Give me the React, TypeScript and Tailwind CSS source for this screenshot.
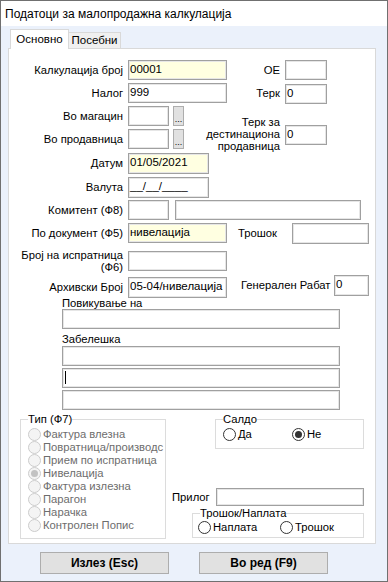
import React from "react"

type BoxProps = { w: string; h?: string; value?: string; yellow?: boolean; caret?: boolean; className?: string }

function Box({ w, h = "h-[20px]", value, yellow, caret, className = "" }: BoxProps) {
  return (
    <div
      className={`${w} ${h} ${className} shrink-0 border border-[#a0a0a0] shadow-[inset_0_0_0_1px_#e6e6e6] ${
        yellow ? "bg-[#ffffe1]" : "bg-white"
      } pl-[1px] leading-[16px] text-[11.5px] text-black overflow-hidden whitespace-nowrap`}
    >
      {caret ? <span className="block w-px h-[13px] bg-black mt-[2px] ml-[1px]" /> : value}
    </div>
  )
}

function Dots() {
  return (
    <div className="w-[11px] h-[20px] ml-[4px] shrink-0 border border-[#adadad] bg-[#e1e1e1] flex items-end justify-center text-[9px] leading-[12px] text-black">
      ...
    </div>
  )
}

function Radio({ label, checked, disabled }: { label: string; checked?: boolean; disabled?: boolean }) {
  return (
    <div className="flex items-center h-[13px] whitespace-nowrap">
      <span
        className={`w-[13px] h-[13px] shrink-0 rounded-full border flex items-center justify-center ${
          disabled ? "border-[#cccccc] bg-[#f4f4f4]" : "border-[#333333] bg-white"
        }`}
      >
        {checked && <span className={`w-[7px] h-[7px] rounded-full ${disabled ? "bg-[#c2c2c2]" : "bg-[#333333]"}`} />}
      </span>
      <span className={`ml-[2px] ${disabled ? "text-[#6d6d6d]" : "text-black"}`}>{label}</span>
    </div>
  )
}

const Label = ({ children }: { children: React.ReactNode }) => (
  <div className="w-[114px] shrink-0 text-right whitespace-nowrap">{children}</div>
)

const TIP = [
  "Фактура влезна",
  "Повратница/производс",
  "Прием по испратница",
  "Нивелација",
  "Фактура излезна",
  "Парагон",
  "Нарачка",
  "Контролен Попис",
]

export default function App() {
  return (
    <div className="w-[388px] h-[582px] border border-[#707070] bg-[#ebf1fb] font-['Liberation_Sans',Arial,sans-serif] text-[11.25px] text-black flex flex-col overflow-hidden">
      {/* Title */}
      <div className="h-[25px] bg-white pl-[4px] flex items-center shrink-0 text-[12px]">Податоци за малопродажна калкулација</div>

      {/* Tabs */}
      <div className="flex items-end pt-[3px] pl-[9px] h-[22px] shrink-0 text-[11.5px]">
        <div className="relative z-10 h-[20px] w-[59px] bg-white border border-b-0 border-[#d9d9d9] flex items-center justify-center -mb-px">
          Основно
        </div>
        <div className="h-[16px] w-[52px] bg-[#f0f0f0] border border-l-0 border-b-0 border-[#d9d9d9] flex items-center justify-center">
          Посебни
        </div>
      </div>

      {/* Panel */}
      <div className="ml-[7px] w-[368px] h-[496px] shrink-0 bg-white border border-[#d9d9d9] pt-[11px] flex flex-col">
        {/* Калкулација број / ОЕ */}
        <div className="flex items-center h-[20px]">
          <Label>Калкулација број</Label>
          <Box w="w-[99px]" className="ml-[5px]" yellow value="00001" />
          <div className="w-[53px] text-right">ОЕ</div>
          <Box w="w-[42px]" className="ml-[5px]" />
        </div>

        {/* Налог / Терк */}
        <div className="flex items-center h-[20px] mt-[3px]">
          <Label>Налог</Label>
          <Box w="w-[99px]" className="ml-[5px]" value="999" />
          <div className="w-[53px] text-right">Терк</div>
          <Box w="w-[42px]" className="ml-[5px] mt-[2px]" value="0" />
        </div>

        {/* Во магацин / Во продавница / Терк за дестинациона продавница */}
        <div className="flex h-[43px] mt-[3px]">
          <div className="flex flex-col gap-[3px]">
            <div className="flex items-center h-[20px]">
              <Label>Во магацин</Label>
              <Box w="w-[41px]" className="ml-[5px]" />
              <Dots />
            </div>
            <div className="flex items-center h-[20px]">
              <Label>Во продавница</Label>
              <Box w="w-[41px]" className="ml-[5px]" />
              <Dots />
            </div>
          </div>
          <div className="w-[96px] text-right leading-[12px] mt-[10px]">
            Терк за
            <br />
            дестинациона
            <br />
            продавница
          </div>
          <Box w="w-[42px]" className="ml-[5px] mt-[19px]" value="0" />
        </div>

        {/* Датум */}
        <div className="flex items-center h-[21px] mt-[4px]">
          <Label>Датум</Label>
          <Box w="w-[81px]" h="h-[21px]" className="ml-[5px]" yellow value="01/05/2021" />
        </div>

        {/* Валута */}
        <div className="flex items-center h-[21px] mt-[3px]">
          <Label>Валута</Label>
          <Box w="w-[81px]" h="h-[21px]" className="ml-[5px]" value="__/__/____" />
        </div>

        {/* Комитент */}
        <div className="flex items-center h-[20px] mt-[2px]">
          <Label>Комитент (Ф8)</Label>
          <Box w="w-[41px]" className="ml-[5px]" />
          <Box w="w-[186px]" className="ml-[6px]" />
        </div>

        {/* По документ / Трошок */}
        <div className="flex items-center h-[21px] mt-[3px]">
          <Label>По документ (Ф5)</Label>
          <Box w="w-[99px]" className="ml-[5px] self-start" yellow value="нивелација" />
          <div className="ml-[11px] w-[54px]">Трошок</div>
          <Box w="w-[77px]" h="h-[21px]" />
        </div>

        {/* Број на испратница */}
        <div className="flex items-end h-[21px] mt-[6px]">
          <div className="w-[114px] text-right leading-[12px] self-center">
            Број на испратница
            <br />
            (Ф6)
          </div>
          <Box w="w-[99px]" className="ml-[5px]" />
        </div>

        {/* Архивски Број / Генерален Рабат */}
        <div className="flex items-center h-[21px] mt-[6px]">
          <Label>Архивски Број</Label>
          <Box w="w-[99px]" h="h-[21px]" className="ml-[5px]" value="05-04/нивелација" />
          <div className="flex items-center h-[21px] -mt-[5px]">
            <div className="ml-[14px] w-[93px] whitespace-nowrap">Генерален Рабат</div>
            <Box w="w-[35px]" h="h-[21px]" value="0" />
          </div>
        </div>

        {/* Повикување на */}
        <div className="ml-[53px] leading-[11px] h-[11px]">Повикување на</div>
        <Box w="w-[278px]" className="ml-[53px]" />

        {/* Забелешка */}
        <div className="ml-[53px] leading-[12px] h-[12px] mt-[4px]">Забелешка</div>
        <Box w="w-[278px]" className="ml-[53px] mt-[1px]" />
        <Box w="w-[278px]" className="ml-[53px] mt-[2px]" caret />
        <Box w="w-[278px]" className="ml-[53px] mt-[2px]" />

        {/* Bottom groups */}
        <div className="flex mt-[3px] ml-[11px]">
          <fieldset className="w-[146px] border border-[#dcdcdc] pl-[7px] pt-[2px] pb-[6px]">
            <legend className="leading-[13px] text-black">Тип (Ф7)</legend>
            <div className="flex flex-col">
              {TIP.map((t) => (
                <Radio key={t} label={t} disabled checked={t === "Нивелација"} />
              ))}
            </div>
          </fieldset>

          <div className="ml-[6px] flex flex-col">
            <fieldset className="ml-[43px] w-[149px] border border-[#dcdcdc] pl-[7px] pt-[2px] pb-[7px]">
              <legend className="leading-[13px]">Салдо</legend>
              <div className="flex">
                <div className="w-[69px]">
                  <Radio label="Да" />
                </div>
                <Radio label="Не" checked />
              </div>
            </fieldset>

            <div className="flex items-center h-[18px] mt-[39px]">
              <div className="w-[44px] whitespace-nowrap">Прилог</div>
              <Box w="w-[148px]" h="h-[18px]" />
            </div>

            <fieldset className="ml-[20px] w-[172px] border border-[#dcdcdc] pl-[5px] pt-[1px] pb-[3px] mt-[1px]">
              <legend className="leading-[13px] ml-[2px]">Трошок/Наплата</legend>
              <div className="flex">
                <div className="w-[82px]">
                  <Radio label="Наплата" />
                </div>
                <Radio label="Трошок" />
              </div>
            </fieldset>
          </div>
        </div>
      </div>

      {/* Buttons */}
      <div className="flex mt-[8px] ml-[39px] gap-[30px]">
        <button className="w-[129px] h-[22px] bg-[#e1e1e1] border border-[#adadad] font-bold text-[12px]">Излез (Esc)</button>
        <button className="w-[129px] h-[22px] bg-[#e1e1e1] border border-[#adadad] font-bold text-[12px]">Во ред (F9)</button>
      </div>
    </div>
  )
}
